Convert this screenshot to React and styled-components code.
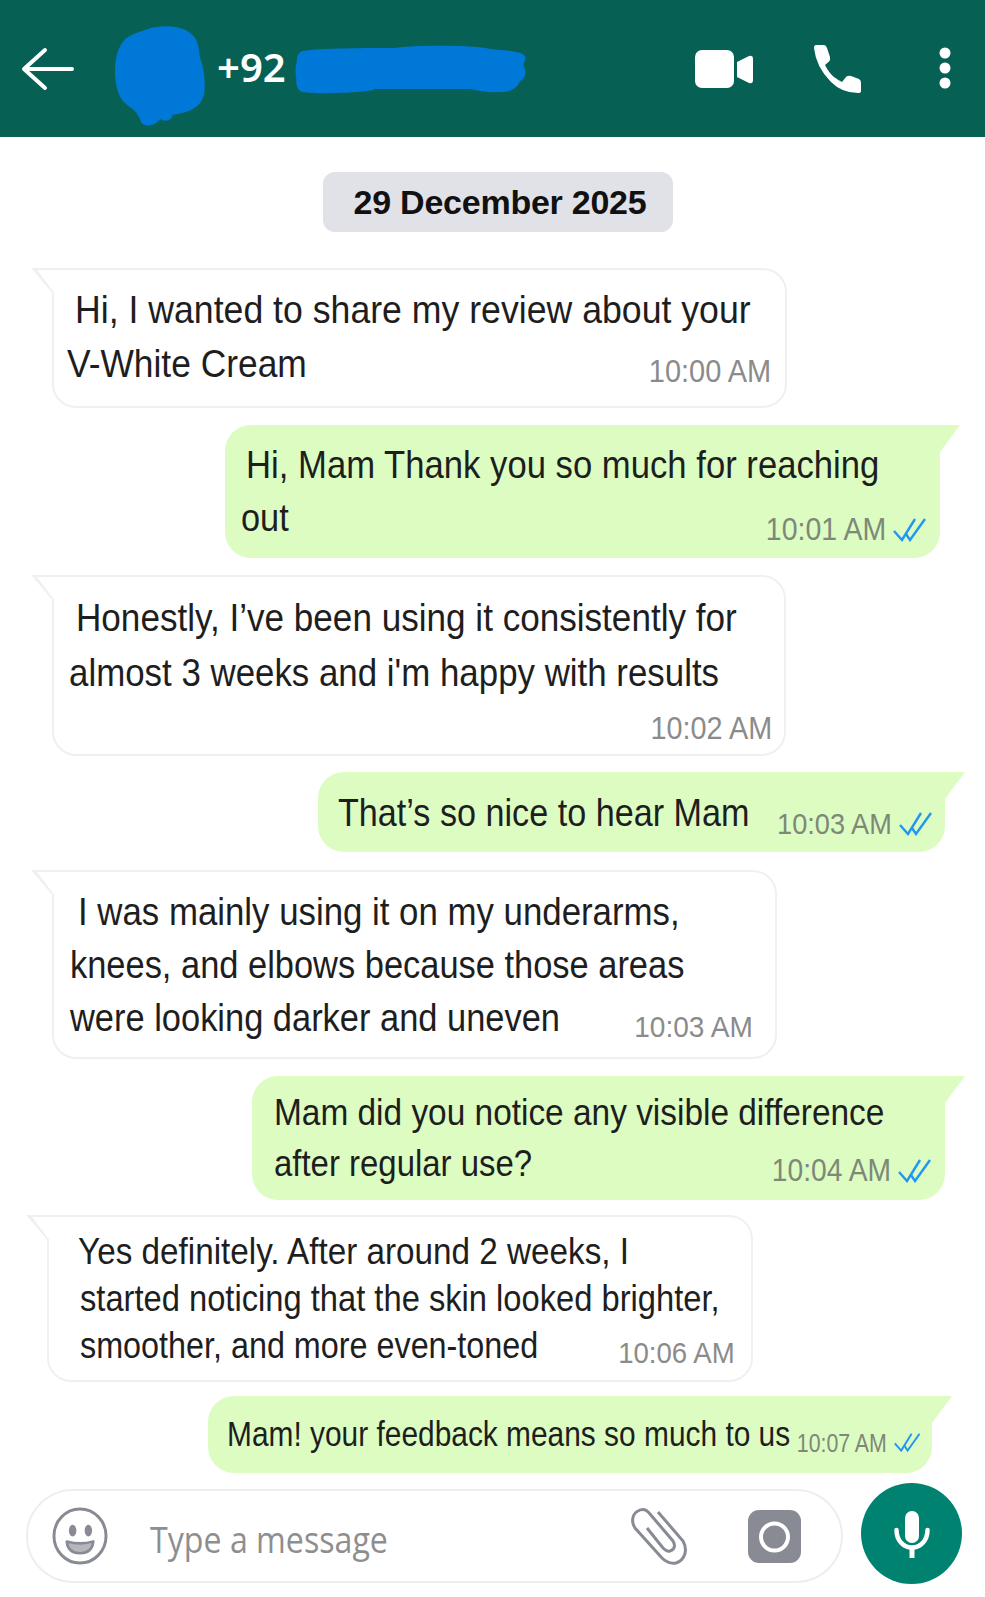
import React from "react";
import styled, { createGlobalStyle } from "styled-components";

const Global = createGlobalStyle`
  html, body { margin: 0; padding: 0; background: #fff; }
  #root { width: 985px; height: 1597px; overflow: hidden; }
`;

const Page = styled.div`
  width: 985px;
  height: 1597px;
  display: flex;
  flex-direction: column;
  background: #fff;
  font-family: "Liberation Sans", Arial, sans-serif;
`;

const Header = styled.header`
  height: 137px;
  flex: none;
  background: #066154;
  display: flex;
  align-items: center;
  padding-left: 20px;
  box-sizing: border-box;
`;

const HeaderIcon = styled.svg`
  flex: none;
  display: block;
  margin-left: ${(p) => p.$ml || 0}px;
  margin-top: ${(p) => p.$mt || 0}px;
`;

const Phone = styled.span`
  color: #fff;
  font-family: "Noto Sans", sans-serif;
  font-weight: 600;
  font-size: 40px;
  margin-left: 10px;
  margin-top: -4px;
  width: 77px;
  white-space: nowrap;
`;

const Chat = styled.main`
  flex: 1;
  display: flex;
  flex-direction: column;
  align-items: flex-start;
`;

const DatePill = styled.div`
  align-self: flex-start;
  margin: 35px 0 0 323px;
  padding-left: 4px;
  box-sizing: border-box;
  width: 350px;
  height: 60px;
  border-radius: 12px;
  background: #e1e2e8;
  color: #111;
  font-weight: 700;
  font-size: 34px;
  letter-spacing: -0.25px;
  display: flex;
  align-items: center;
  justify-content: center;
`;

const Bubble = styled.div`
  position: relative;
  box-sizing: border-box;
  margin-top: ${(p) => p.$mt}px;
  margin-left: ${(p) => p.$left}px;
  width: ${(p) => p.$w}px;
  height: ${(p) => p.$h}px;
  padding: ${(p) => p.$pt}px ${(p) => p.$pr}px 0 ${(p) => p.$pl}px;
  font-size: ${(p) => p.$fs}px;
  color: #1e1e1e;
  border-radius: ${(p) => (p.$out ? "26px 0 26px 26px" : "0 24px 24px 24px")};
  background: ${(p) => (p.$out ? "#dcfcc2" : "#fff")};
  border: ${(p) => (p.$out ? "none" : "2px solid #f0f0f0")};

  &::before {
    content: "";
    position: absolute;
    top: ${(p) => (p.$out ? "0" : "-2px")};
    ${(p) => (p.$out ? "left: 100%;" : "right: 100%;")}
    width: ${(p) => (p.$out ? 20 : 23)}px;
    height: 27px;
    background: ${(p) => (p.$out ? "#dcfcc2" : "#f0f0f0")};
    clip-path: ${(p) =>
      p.$out
        ? "polygon(0 0, 100% 0, 0 100%)"
        : "polygon(100% 0, 0 0, 100% 100%)"};
  }

  &::after {
    content: "";
    display: ${(p) => (p.$out ? "none" : "block")};
    position: absolute;
    top: 0;
    right: calc(100% - 2px);
    width: 22px;
    height: 25px;
    background: #fff;
    clip-path: polygon(100% 0, 3px 0, 100% 100%);
  }
`;

const Line = styled.div`
  display: flex;
  align-items: flex-start;
  height: ${(p) => p.$lh}px;
  line-height: ${(p) => p.$lh}px;
  padding-left: ${(p) => p.$indent || 0}px;
  white-space: nowrap;
`;

/* squeezed horizontally like the reference; takes no room so the meta stays at the right edge */
const LineText = styled.span`
  flex: 0 0 0;
  width: 0;
  display: inline-block;
  transform: scaleX(${(p) => p.$sx});
  transform-origin: left center;
`;

const Meta = styled.span`
  display: inline-flex;
  align-items: center;
  gap: 7px;
  margin-left: auto;
  padding-top: ${(p) => p.$dy || 0}px;
  height: ${(p) => p.$lh}px;
  font-size: ${(p) => p.$fs || 32}px;
  color: ${(p) => (p.$out ? "#7e8879" : "#8b8b8b")};
`;

const MetaTime = styled.span`
  display: inline-block;
  transform: scaleX(${(p) => p.$sx});
  transform-origin: right center;
`;

const Ticks = ({ s = 1 }) => (
  <svg width={33 * s} height={24 * s} viewBox="0 0 33 24" fill="none" stroke="#2196f3" strokeWidth="2.4">
    <path d="M1 13 L9 22 L22 1" />
    <path d="M13 16 L17 22 L32 1" />
  </svg>
);

const Footer = styled.footer`
  flex: none;
  height: 114px;
  display: flex;
  align-items: flex-start;
  padding-left: 26px;
  box-sizing: border-box;
`;

const InputBar = styled.div`
  box-sizing: border-box;
  margin-top: 6px;
  width: 817px;
  height: 94px;
  border: 2px solid #eeeeee;
  border-radius: 47px;
  display: flex;
  align-items: center;
  padding: 0 39px 0 24px;
`;

const Placeholder = styled.span`
  margin-left: 42px;
  padding-top: 6px;
  font-family: "Open Sans", sans-serif;
  font-size: 36px;
  color: #8e8e8e;
  flex: 1;
  transform: scaleX(0.893);
  transform-origin: left center;
`;

const MicButton = styled.div`
  flex: none;
  width: 101px;
  height: 101px;
  margin-left: 18px;
  border-radius: 50%;
  background: #008271;
  display: flex;
  align-items: center;
  justify-content: center;
`;

const CameraIcon = styled.svg`
  margin: 2px 0 0 60px;
`;

const grey = "#888b94";

const Row = ({ lh, indent, sx = 0.88, text, meta }) => (
  <Line $lh={lh} $indent={indent}>
    <LineText $sx={sx}>{text}</LineText>
    {meta}
  </Line>
);

const m = (time, lh, dy, out, fs, sx, s) => (
  <Meta $lh={lh} $dy={dy} $out={out} $fs={fs}>
    <MetaTime $sx={sx}>{time}</MetaTime>
    {out && <Ticks s={s} />}
  </Meta>
);

export default function App() {
  return (
    <Page>
      <Global />
      <Header>
        <HeaderIcon width="54" height="44" viewBox="20 46 54 44" fill="none" stroke="#fff" strokeWidth="4" strokeLinecap="round" strokeLinejoin="round">
          <path d="M72 68 H25 M45 49 L24 68 L45 87" />
        </HeaderIcon>
        <HeaderIcon $ml={39} $mt={16} width="94" height="105" viewBox="113 24 94 105" fill="#0078d7">
          <path d="M148 29 C160 25 180 25 190 33 C198 38 199 48 200 58 C204 68 206 85 204 95 C200 108 190 112 172 115 C172 121 165 122 160 119 C155 126 145 128 141 122 C139 116 137 112 130 107 C118 100 115 85 115 70 C115 55 120 42 128 37 C135 33 142 31 148 29Z" />
        </HeaderIcon>
        <Phone>+92</Phone>
        <HeaderIcon width="234" height="52" viewBox="294 42 234 52" fill="#0078d7">
          <path d="M303 50 C320 47 370 47 395 47 C410 44 470 44 485 47 C500 50 520 49 525 55 C527 60 522 62 524 66 C527 72 525 78 520 80 C518 86 510 92 500 91 C490 92 480 90 470 88 L375 88 C370 92 305 94 300 90 C295 85 297 80 296 76 C295 70 296 62 297 60 C297 56 297 52 303 50Z" />
        </HeaderIcon>
        <HeaderIcon $ml={166} width="60" height="40" viewBox="694 49 60 40" fill="#fff">
          <rect x="695" y="50" width="39" height="38" rx="7" />
          <path d="M737 62 L749 56 Q753 55 753 59 V80 Q753 84 749 83 L737 77 Z" />
        </HeaderIcon>
        <HeaderIcon $ml={56} width="56" height="56" viewBox="810 40 56 56" fill="#fff">
          <path d="M816 44 L824 44 Q826 44 827 47 L830 56 Q830.5 59 829 60.5 L825 64 Q829 72 834 76 Q838 79 842 81 L846 76 Q848 74 851 75 L859 78 Q861 79 861 82 L861 90 Q861 92 858 92 Q842 92 831 81 Q816 66 814 47 Q814 44 816 44Z" />
        </HeaderIcon>
        <HeaderIcon $ml={72} width="14" height="46" viewBox="937 46 14 46" fill="#fff">
          <circle cx="944" cy="53" r="5.5" />
          <circle cx="944" cy="68" r="5.5" />
          <circle cx="944" cy="83" r="5.5" />
        </HeaderIcon>
      </Header>

      <Chat>
        <DatePill>29 December 2025</DatePill>

        <Bubble $mt={36} $left={52} $w={735} $h={140} $pt={13} $pl={13} $pr={14} $fs={39}>
          <Row lh={54} indent={8} sx={0.914} text="Hi, I wanted to share my review about your" />
          <Row lh={54} sx={0.907} text="V-White Cream" meta={m("10:00 AM", 54, 7, false, 32, 0.905)} />
        </Bubble>

        <Bubble $out $mt={17} $left={225} $w={715} $h={133} $pt={13} $pl={16} $pr={14} $fs={39}>
          <Row lh={53} indent={5} sx={0.889} text="Hi, Mam Thank you so much for reaching" />
          <Row lh={53} sx={0.88} text="out" meta={m("10:01 AM", 53, 12, true, 32, 0.89)} />
        </Bubble>

        <Bubble $mt={17} $left={52} $w={734} $h={181} $pt={13} $pl={15} $pr={12} $fs={39}>
          <Row lh={55} indent={7} sx={0.9} text="Honestly, I’ve been using it consistently for" />
          <Row lh={55} sx={0.894} text="almost 3 weeks and i'm happy with results" />
          <Row lh={53} text="" meta={m("10:02 AM", 53, 2, false, 32, 0.9)} />
        </Bubble>

        <Bubble $out $mt={16} $left={318} $w={627} $h={80} $pt={14} $pl={20} $pr={13} $fs={39}>
          <Row lh={54} sx={0.876} text="That’s so nice to hear Mam" meta={m("10:03 AM", 54, 11, true, 30, 0.905)} />
        </Bubble>

        <Bubble $mt={18} $left={52} $w={725} $h={189} $pt={14} $pl={16} $pr={22} $fs={38}>
          <Row lh={53} indent={8} sx={0.916} text="I was mainly using it on my underarms," />
          <Row lh={53} sx={0.906} text="knees, and elbows because those areas" />
          <Row lh={53} sx={0.906} text="were looking darker and uneven" meta={m("10:03 AM", 53, 8, false, 30, 0.935)} />
        </Bubble>

        <Bubble $out $mt={17} $left={252} $w={693} $h={124} $pt={11} $pl={22} $pr={14} $fs={37}>
          <Row lh={51} sx={0.903} text="Mam did you notice any visible difference" />
          <Row lh={51} sx={0.89} text="after regular use?" meta={m("10:04 AM", 51, 7, true, 31, 0.91)} />
        </Bubble>

        <Bubble $mt={15} $left={47} $w={706} $h={167} $pt={11} $pl={28} $pr={16} $fs={36}>
          <Row lh={47} indent={1} sx={0.924} text="Yes definitely. After around 2 weeks, I" />
          <Row lh={47} indent={3} sx={0.908} text="started noticing that the skin looked brighter," />
          <Row lh={47} indent={3} sx={0.898} text="smoother, and more even-toned" meta={m("10:06 AM", 47, 7, false, 30, 0.92)} />
        </Bubble>

        <Bubble $out $mt={14} $left={208} $w={724} $h={77} $pt={13} $pl={19} $pr={12} $fs={35}>
          <Row lh={50} sx={0.854} text="Mam! your feedback means so much to us" meta={m("10:07 AM", 50, 9, true, 26, 0.82, 0.8)} />
        </Bubble>
      </Chat>

      <Footer>
        <InputBar>
          <svg width="56" height="58" viewBox="51 1508 57 59" fill="none" stroke={grey}>
            <ellipse cx="79.5" cy="1537.5" rx="26.5" ry="27.5" strokeWidth="3" />
            <ellipse cx="72" cy="1532" rx="3.8" ry="6" fill={grey} stroke="none" />
            <ellipse cx="88" cy="1532" rx="3.8" ry="6" fill={grey} stroke="none" />
            <path d="M66 1543 Q80 1547 93 1543 Q92 1555 79.5 1555 Q67 1555 66 1543Z" fill="#b5b7bd" strokeWidth="2.6" strokeLinejoin="round" />
          </svg>
          <Placeholder>Type a message</Placeholder>
          <svg width="58" height="60" viewBox="631 1508 58 60" fill="none" stroke={grey} strokeWidth="3">
            <path d="M659 1514 L684 1543 C689 1552 686 1562 677 1565 C671 1566 667 1564 663 1560 L636 1530 C632 1524 633 1516 639 1513 C644 1510 648 1512 651 1516 L674 1543 C677 1548 675 1552 671 1553 C668 1554 666 1552 664 1550 L648 1530" />
          </svg>
          <CameraIcon width="54" height="54" viewBox="748 1510 54 54">
            <rect x="748" y="1510" width="53" height="53" rx="11" fill={grey} />
            <circle cx="774.5" cy="1537" r="13.5" fill="none" stroke="#fff" strokeWidth="4" />
          </CameraIcon>
        </InputBar>
        <MicButton>
          <svg width="101" height="101" viewBox="861 1483 101 101" fill="none" stroke="#fff">
            <rect x="905" y="1511" width="14" height="32" rx="7" fill="#fff" stroke="none" />
            <path d="M896.5 1530 C896.5 1540 903 1547.5 912 1547.5 C921 1547.5 927.5 1540 927.5 1530" strokeWidth="4.5" strokeLinecap="round" />
            <path d="M912 1548 V1558" strokeWidth="5" />
          </svg>
        </MicButton>
      </Footer>
    </Page>
  );
}
